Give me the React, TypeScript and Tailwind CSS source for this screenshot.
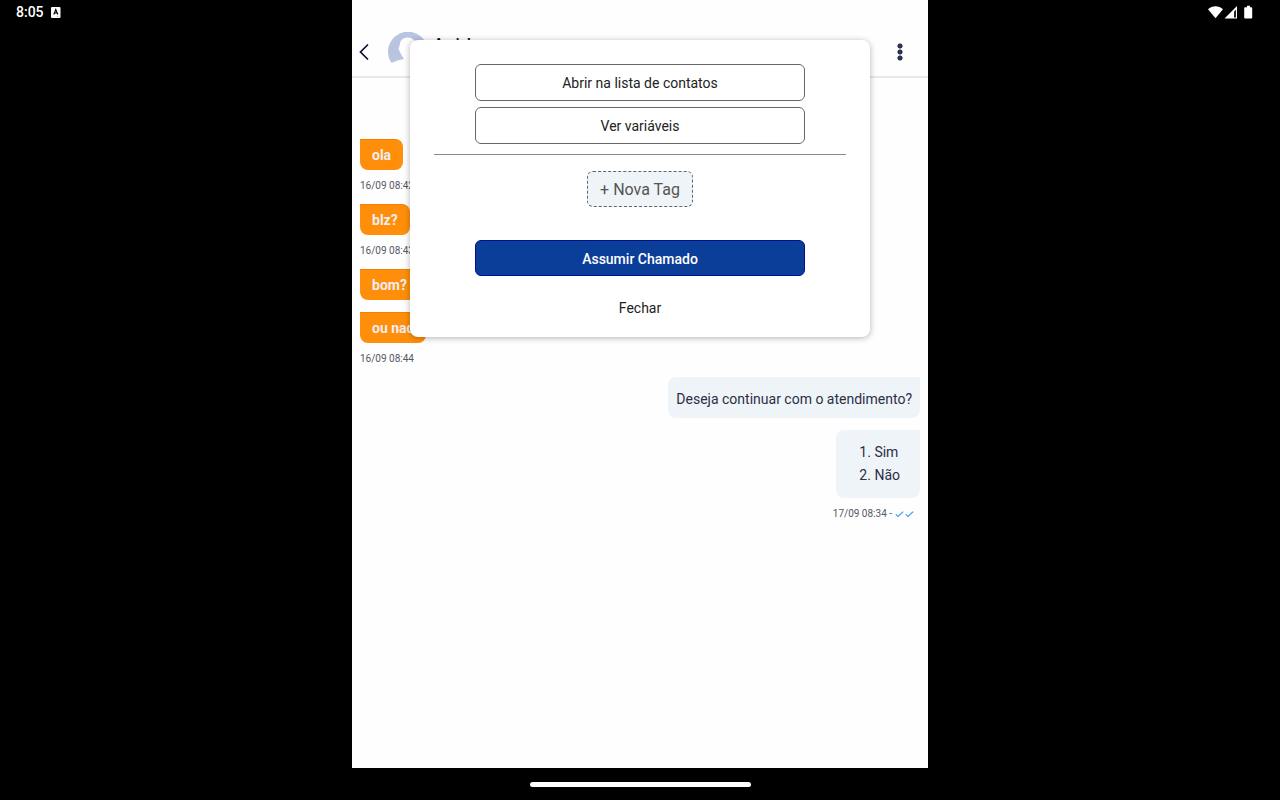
import { clsx } from "clsx";

interface Message {
  id: number;
  text: string;
  date?: string;
}

const received: Message[] = [
  { id: 1, text: "ola", date: "16/09 08:42" },
  { id: 2, text: "blz?", date: "16/09 08:43" },
  { id: 3, text: "bom?" },
  { id: 4, text: "ou nao", date: "16/09 08:44" },
];

function StatusLeft() {
  return (
    <div className="flex h-6 items-center gap-[7px] pl-4 text-sm font-medium text-white">
      <span>8:05</span>
      <svg width="10" height="11" viewBox="0 0 10 11" aria-hidden="true">
        <rect width="9.500" height="11" rx="1" fill="#fff" />
        <path d="M2.800 7.500 4.800 2.500 6.800 7.500M3.600 6h2.400" fill="none" stroke="#000" strokeWidth="1.100" />
        <path d="M5.500 9.300h2" stroke="#999" strokeWidth="0.600" />
      </svg>
    </div>
  );
}

function StatusRight() {
  return (
    <div className="flex h-6 items-center justify-end pr-[27px]">
      <svg width="45" height="14" viewBox="0 0 45 14" fill="#fff" aria-hidden="true">
        <path d="M0 4.200C4.200.200 10.800.200 15 4.200L7.500 13.300Z" />
        <path d="M29 1v12.500H16.500Z" />
        <path d="M26 6.500 28 4.500v8h-2Z" fill="#222" />
        <path d="M39 .8h3v1.400h1.200q1 0 1 1v9.200q0 1-1 1h-6q-1 0-1-1V3.200q0-1 1-1H39Z" />
      </svg>
    </div>
  );
}

function Header() {
  return (
    <header className="flex h-[78px] items-center border-b-2 border-[#e8e8ea] pt-7 pr-5 pl-1">
      <button type="button" aria-label="Voltar" className="flex h-8 w-8 items-center pl-[3px]">
        <svg width="10" height="16" viewBox="0 0 10 16" fill="none" stroke="#0b0f33" strokeWidth="1.700">
          <path d="M8.500 1 1.500 8l7 7" strokeLinecap="round" strokeLinejoin="miter" />
        </svg>
      </button>
      <svg width="40" height="40" viewBox="0 0 40 40" aria-hidden="true">
        <path
          d="M3.500 31A20 20 0 1 1 36.500 31Q32 28 26 28L25 23Q29 19 28 12Q26 5 19 5.500Q12 6.500 12 12L10.500 17 12 20Q13 23 16 27Q9 28 3.500 31Z"
          fill="#b8c4e0"
        />
      </svg>
      <h1 className="ml-[6px] flex-1 self-start pt-[6px] text-sm leading-5 font-bold text-[#0b0f33]">
        Azriel
      </h1>
      <button type="button" aria-label="Mais opções" className="flex h-8 w-4 items-center justify-center">
        <svg width="6" height="18" viewBox="0 0 6 18" fill="#333a5c" stroke="#0b0f33" strokeWidth="1">
          <circle cx="3" cy="3" r="2.100" />
          <circle cx="3" cy="9" r="2.100" />
          <circle cx="3" cy="15" r="2.100" />
        </svg>
      </button>
    </header>
  );
}

function ReceivedMessage({ message }: { message: Message }) {
  return (
    <li className="flex flex-col items-start">
      <p className="rounded-lg rounded-tl-none border-t border-[#f77f00] bg-[#ff8f0a] px-3 py-[5px] text-sm leading-5 font-bold text-[#f3edf3]">
        {message.text}
      </p>
      <time className={clsx("text-[10px] leading-[14px] text-[#555766]", message.date ? "mt-[9px] mb-[11px]" : "mb-3")}>
        {message.date}
      </time>
    </li>
  );
}

function Check() {
  return (
    <svg width="9" height="7" viewBox="0 0 9 7" fill="none" stroke="#3b97ff" strokeWidth="1.100" aria-hidden="true">
      <path d="M.8 3.300 3 5.500 8.200.600" />
    </svg>
  );
}

function SentMessages() {
  return (
    <div className="flex flex-col items-end text-sm text-[#2b2e45]">
      <p className="rounded-lg rounded-tr-none bg-[#eff4f9] px-2 pt-3 pb-[9px] leading-5">
        Deseja continuar com o atendimento?
      </p>
      <ol className="mt-3 list-inside list-decimal rounded-lg rounded-tr-none bg-[#eff4f9] py-[11px] pr-5 pl-[23px] leading-[23px]">
        <li>Sim</li>
        <li>Não</li>
      </ol>
      <p className="mt-[9px] flex items-center gap-px pr-[6px] text-[10px] leading-[14px] text-[#555766]">
        <span className="mr-[2px]">17/09 08:34 -</span>
        <Check />
        <Check />
      </p>
    </div>
  );
}

function ContactDialog() {
  return (
    <div
      role="dialog"
      aria-label="Opções do contato"
      className="absolute inset-x-[10%] top-10 flex flex-col items-center rounded-lg bg-white px-6 pt-6 pb-[15px] text-sm text-[#222] shadow-[0_1px_6px_rgba(0,0,0,0.3)]"
    >
      <div className="flex w-4/5 flex-col gap-[6px]">
        <button type="button" className="h-[37px] rounded-md border border-[#666]">
          Abrir na lista de contatos
        </button>
        <button type="button" className="h-[37px] rounded-md border border-[#666]">
          Ver variáveis
        </button>
      </div>
      <hr className="mt-[10px] w-full border-[#8a8a8a]" />
      <button
        type="button"
        className="mt-4 h-9 rounded-md border border-dashed border-[#666] bg-[#eff4f9] px-3 pt-px text-base text-[#555]"
      >
        + Nova Tag
      </button>
      <button
        type="button"
        className="mt-[33px] h-9 w-4/5 rounded-md border border-[#00118f] bg-[#0b3e98] pt-px font-medium text-white"
      >
        Assumir Chamado
      </button>
      <button type="button" className="mt-[18px] h-7 px-4">
        Fechar
      </button>
    </div>
  );
}

export default function App() {
  return (
    <div className="flex min-h-screen flex-col bg-black font-['Roboto',sans-serif]">
      <div className="grid flex-1 grid-cols-[1fr_45%_1fr]">
        <StatusLeft />
        <main className="relative bg-[#fefefe]">
          <Header />
          <div className="px-2 pt-[61px]">
            <ul>
              {received.map((m) => (
                <ReceivedMessage key={m.id} message={m} />
              ))}
            </ul>
            <SentMessages />
          </div>
          <ContactDialog />
        </main>
        <StatusRight />
      </div>
      <div className="flex h-8 items-center justify-center">
        <div className="h-[5px] w-[221px] rounded-full bg-white" />
      </div>
    </div>
  );
}
